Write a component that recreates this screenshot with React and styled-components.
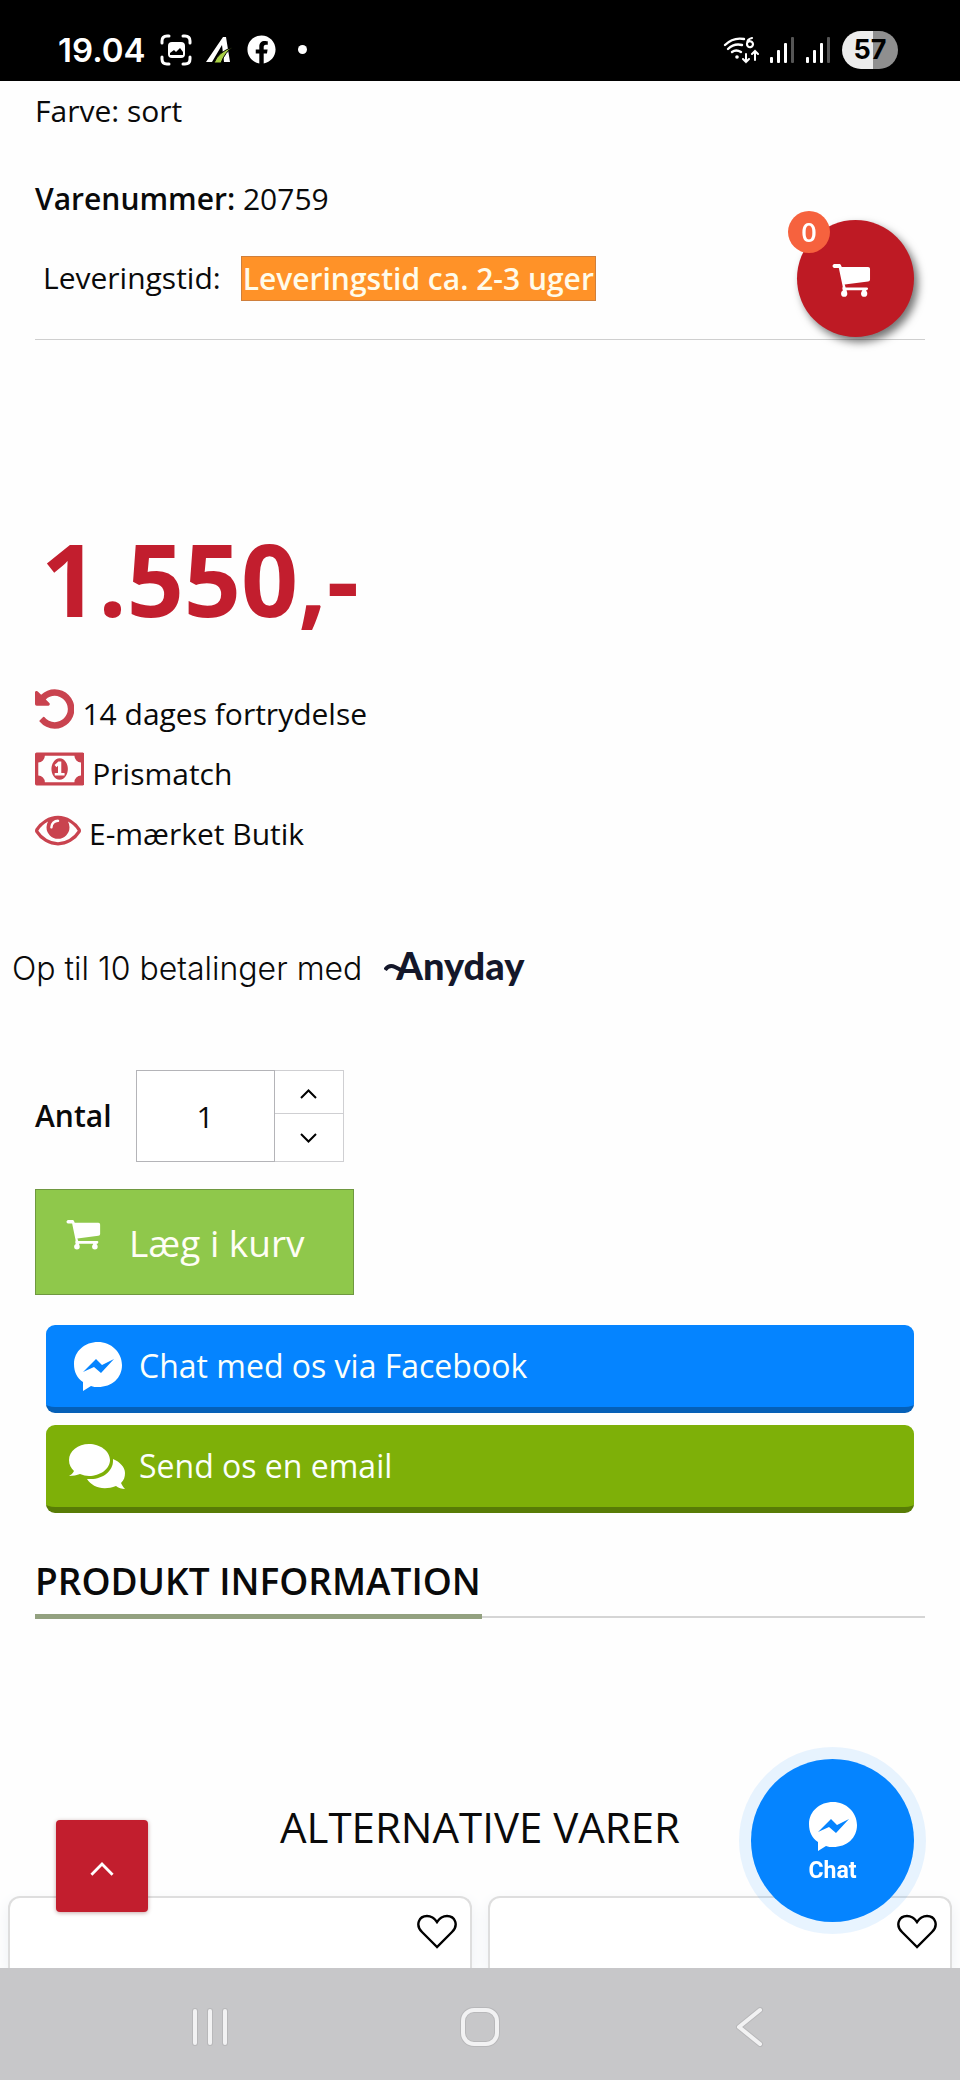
import React, { useState } from "react";
import styled, { createGlobalStyle } from "styled-components";
import { FaFacebook } from "react-icons/fa";

const GlobalStyle = createGlobalStyle`
  *, *::before, *::after { box-sizing: border-box; }
  body { margin: 0; background: #fefefe; }
  button, input { font-family: inherit; color: inherit; margin: 0; }
  h2, p, ul { margin: 0; padding: 0; }
`;

const Page = styled.div`
  display: flex;
  flex-direction: column;
  min-height: 100vh;
  font-family: "Open Sans", sans-serif;
  font-size: 30px;
  line-height: 44px;
  color: #0a0a0a;
`;

/* ---------- status bar ---------- */

const StatusBar = styled.header`
  display: flex;
  justify-content: space-between;
  align-items: center;
  height: 81px;
  padding: 18px 62px 0 58px;
  background: #000;
  color: #fff;
`;

const StatusGroup = styled.div`
  display: flex;
  align-items: center;
  gap: ${(p) => p.$gap}px;
`;

const Clock = styled.time`
  font-family: Inter, sans-serif;
  font-size: 33px;
  font-weight: 600;
  line-height: 40px;
`;

const Dot = styled.span`
  width: 9px;
  height: 9px;
  margin-left: 8px;
  border-radius: 50%;
  background: #fff;
`;

const Battery = styled.span`
  width: 56px;
  height: 38px;
  border-radius: 19px;
  background: linear-gradient(90deg, #ececec 56%, #8f8f8f 56%);
  color: #000;
  font-family: Inter, sans-serif;
  font-size: 27px;
  font-weight: 700;
  line-height: 38px;
  text-align: center;
`;

/* ---------- product facts ---------- */

const Main = styled.main`
  display: flex;
  flex-direction: column;
  flex: 1;
  padding-top: 8px;
`;

const Section = styled.section`
  margin: ${(p) => p.$top || 0}px 35px 0;
`;

const Fact = styled.p`
  margin-bottom: ${(p) => p.$after}px;
`;

const Strong = styled.strong`
  font-weight: 600;
`;

const Delivery = styled.p`
  display: flex;
  gap: 20px;
  padding: 0 8px 38px;
  border-bottom: 1px solid #cfcfcf;
`;

const DeliveryTag = styled.strong`
  border: 1px solid #cf7f3c;
  padding: 0 1px;
  background: #ff9228;
  color: #fffbea;
  font-weight: 600;
  line-height: 43px;
`;

const Price = styled.p`
  padding-left: 6px;
  color: #c21e2e;
  font-size: 100px;
  font-weight: 700;
  line-height: 120px;
`;

const Perks = styled.ul`
  display: flex;
  flex-direction: column;
  gap: 16px;
  list-style: none;
`;

const Perk = styled.li`
  display: flex;
  align-items: center;
  gap: 8px;
  height: 44px;

  svg {
    height: 46px;
    margin-bottom: 10px;
    fill: #c9434f;
  }
`;

const Installments = styled.p`
  display: flex;
  align-items: baseline;
  gap: 22px;
  margin: 87px 12px 0;
  font-family: Inter, sans-serif;
  font-size: 32px;
  font-weight: 300;
`;

const AnydayLogo = styled.span`
  display: flex;
  align-items: baseline;
  color: #14172a;
  font-family: Lato, sans-serif;
  font-size: 38px;
  font-weight: 900;

  svg {
    margin-right: -8px;
  }
`;

/* ---------- purchase form ---------- */

const QuantityRow = styled.div`
  display: flex;
  align-items: center;
  gap: 24px;
`;

const QuantityLabel = styled.label`
  font-weight: 600;
`;

const Stepper = styled.div`
  display: flex;
  height: 92px;
`;

const QuantityInput = styled.input`
  width: 139px;
  border: 1px solid #b4b4b8;
  border-radius: 0;
  background: #fff;
  font-size: 30px;
  text-align: center;
  outline: none;
`;

const StepButtons = styled.div`
  display: grid;
  grid-template-rows: 44px 48px;
  width: 69px;
`;

const StepButton = styled.button`
  display: flex;
  align-items: center;
  justify-content: center;
  padding: 4px 0 0;
  border: 1px solid #cfcfd2;
  border-left: 0;
  background: #fff;

  & + & {
    border-top: 0;
    padding: 0;
  }
`;

const AddToCart = styled.button`
  display: flex;
  align-items: center;
  gap: 28px;
  height: 106px;
  margin-top: 27px;
  padding: 0 48px 0 30px;
  border: 1px solid #6f9840;
  background: #8fc84b;
  color: #fffef5;
  font-size: 37px;

  svg {
    margin-bottom: 14px;
  }
`;

const ContactLinks = styled.nav`
  display: flex;
  flex-direction: column;
  gap: 12px;
  margin: 30px 46px 0;
`;

const ContactLink = styled.a`
  display: flex;
  align-items: center;
  height: 88px;
  border-bottom: 6px solid ${(p) => p.$edge};
  border-radius: 9px;
  background: ${(p) => p.$color};
  color: #fbfffb;
  font-size: 32px;
  text-decoration: none;
`;

const LinkIcon = styled.span`
  display: flex;
  justify-content: center;
  width: 93px;
  padding-left: 10px;
`;

/* ---------- lower sections ---------- */

const InfoHeading = styled.div`
  display: flex;
  border-bottom: 2px solid #d5d5d5;

  h2 {
    margin-bottom: -3px;
    padding: 0 1px 8px 0;
    border-bottom: 5px solid #93a180;
    font-size: 37px;
    font-weight: 600;
    line-height: 50px;
  }
`;

const AltHeading = styled.h2`
  margin-top: 181px;
  font-size: 42px;
  font-weight: 400;
  line-height: 56px;
  text-align: center;
`;

const Cards = styled.section`
  display: grid;
  grid-template-columns: 1fr 1fr;
  gap: 16px;
  flex: 1;
  min-height: 71px;
  margin-top: 41px;
  padding: 0 8px;
`;

const Card = styled.article`
  display: flex;
  justify-content: flex-end;
  align-items: flex-start;
  padding: 16px 13px 0;
  border: 2px solid #dedede;
  border-bottom: 0;
  border-radius: 12px 12px 0 0;
  background: #fff;
  box-shadow: 0 6px 16px #edf0f4;
`;

const IconButton = styled.button`
  display: flex;
  padding: 0;
  border: 0;
  background: none;
`;

const NavBar = styled.nav`
  position: relative;
  z-index: 3;
  display: grid;
  grid-template-columns: 1fr 1fr 1fr;
  justify-items: center;
  align-items: center;
  height: 112px;
  padding: 6px 75px 0;
  background: #c7c7c9;
`;

/* ---------- floating controls ---------- */

const CartButton = styled.button`
  position: fixed;
  top: 220px;
  right: 46px;
  display: flex;
  align-items: center;
  justify-content: center;
  width: 117px;
  height: 117px;
  padding: 4px 8px 0 0;
  border: 0;
  border-radius: 50%;
  background: #be1a24;
  box-shadow: 4px 5px 8px rgba(0, 0, 0, 0.55);
`;

const CartCount = styled.span`
  position: absolute;
  top: -9px;
  left: -9px;
  width: 42px;
  height: 42px;
  border-radius: 50%;
  background: #f6623e;
  color: #fff;
  font-size: 27px;
  font-weight: 600;
  line-height: 42px;
  text-align: center;
`;

const TopButton = styled.button`
  position: fixed;
  bottom: 168px;
  left: 56px;
  display: flex;
  align-items: center;
  justify-content: center;
  width: 92px;
  height: 92px;
  padding: 6px 0 0;
  border: 0;
  border-radius: 4px;
  background: #c21e2e;
  box-shadow: 0 1px 4px rgba(90, 0, 0, 0.35);
`;

const ChatButton = styled.button`
  position: fixed;
  right: 46px;
  bottom: 158px;
  display: flex;
  flex-direction: column;
  align-items: center;
  gap: 7px;
  width: 163px;
  height: 163px;
  padding: 43px 0 0;
  border: 0;
  border-radius: 50%;
  background: #0584ff;
  box-shadow: 0 0 0 12px rgba(5, 132, 255, 0.09);

  span {
    color: #fff;
    font-family: Roboto, sans-serif;
    font-size: 23px;
    font-weight: 700;
    line-height: 26px;
  }
`;

/* ---------- drawings ---------- */

const CaptureIcon = () => (
  <svg width="32" height="32" viewBox="0 0 32 32" fill="none" stroke="#fff" strokeWidth="3" strokeLinecap="round">
    <path d="M2 9V7q0-5 5-5h2M23 2h2q5 0 5 5v2M30 23v2q0 5-5 5h-2M9 30H7q-5 0-5-5v-2" />
    <rect x="8" y="8" width="17" height="16" rx="4" fill="#fff" stroke="none" />
    <path d="M10 21v-2l4-3 2 2 4-4 3 4v3z" fill="#000" stroke="none" />
  </svg>
);

const PeakIcon = () => (
  <svg width="27" height="27" viewBox="0 0 27 27">
    <path d="M0 26L17 1h3l4 25h-6L16 9 6 26z" fill="#fff" />
    <path d="M8 27q4-11 19-16-8 5-12 16z" fill="#a8cf45" stroke="#000" strokeWidth="1" />
  </svg>
);

const WifiIcon = () => (
  <svg width="36" height="30" viewBox="0 0 36 30" fill="none" stroke="#fff" strokeWidth="2.4" strokeLinecap="round">
    <path d="M2 10q8-8 19-6M5 14q6-6 14-4M9 17q4-3 9 0" />
    <circle cx="14" cy="22" r="1.8" fill="#fff" stroke="none" />
    <path d="M29 3q-5 1-5 6a3 3 0 1 0 1-2" strokeWidth="2.2" />
    <path d="M23 19v8m-3-3l3 3 3-3M32 25v-9m-3 3l3-3 3 3" strokeWidth="2" />
  </svg>
);

const SignalIcon = () => (
  <svg width="25" height="28" viewBox="0 0 25 28" fill="#fff">
    <rect x="0" y="21" width="3" height="6" rx="1" />
    <rect x="7" y="14" width="3" height="13" rx="1" />
    <rect x="14" y="7" width="3" height="20" rx="1" />
    <rect x="21" y="1" width="3" height="26" rx="1" fill="#555" />
  </svg>
);

const UndoIcon = () => (
  <svg viewBox="128 0 1536 1792">
    <path d="M1664 896q0 156-61 298t-164 245-245 164-298 61q-172 0-327-72.500t-264-204.500q-7-10-6.500-22.500t8.500-20.500l137-138q10-9 25-9 16 2 23 12 73 95 179 147t225 52q104 0 198.500-40.500t163.500-109.500 109.500-163.500 40.500-198.500-40.500-198.500-109.500-163.500-163.500-109.500-198.500-40.500q-98 0-188 35.500t-160 101.500l137 138q31 30 14 69-17 40-59 40h-448q-26 0-45-19t-19-45v-448q0-42 40-59 39-17 69 14l130 129q107-101 244.500-156.500t284.500-55.500q156 0 298 61t245 164 164 245 61 298z" />
  </svg>
);

const MoneyIcon = () => (
  <svg viewBox="0 0 1920 1792">
    <path d="M768 1152h384v-96h-128v-448h-114l-148 137 77 80q42-37 55-57h2v288h-128v96zm512-256q0 70-21 142t-59.500 134-101.500 101-138 39-138-39-101.500-101-59.500-134-21-142 21-142 59.500-134 101.500-101 138-39 138 39 101.500 101 59.500 134 21 142zm512 256v-512q-106 0-181-75t-75-181h-1152q0 106-75 181t-181 75v512q106 0 181 75t75 181h1152q0-106 75-181t181-75zm128-832v1152q0 26-19 45t-45 19h-1792q-26 0-45-19t-19-45v-1152q0-26 19-45t45-19h1792q26 0 45 19t19 45z" />
  </svg>
);

const EyeIcon = () => (
  <svg viewBox="0 0 1792 1792">
    <path d="M1664 960q-152-236-381-353 61 104 61 225 0 185-131.500 316.500t-316.500 131.500-316.500-131.500-131.500-316.500q0-121 61-225-229 117-381 353 133 205 333.500 326.500t434.500 121.500 434.500-121.500 333.500-326.500zm-720-384q0-20-14-34t-34-14q-125 0-214.500 89.500t-89.500 214.500q0 20 14 34t34 14 34-14 14-34q0-86 61-147t147-61q20 0 34-14t14-34zm848 384q0 34-20 69-140 230-376.500 368.500t-499.500 138.500-499.500-139-376.500-368q-20-35-20-69t20-69q140-229 376.500-368t499.500-139 499.500 139 376.500 368q20 35 20 69z" />
  </svg>
);

const CartIcon = ({ size }) => (
  <svg width={size} height={(size * 34) / 40} viewBox="0 0 40 34" fill="#fff">
    <path d="M2 0h6q1 0 2 3h27q2 0 2 2v11q0 2-2 2l-24 3 1 3h22q2 1 0 3H12q-2-1-1-4L7 4H2Q-1 2 2 0z" />
    <path d="M11 25h4v4h-4zM31 25h4v4h-4z" />
    <circle cx="12.500" cy="30.500" r="3.200" />
    <circle cx="33" cy="30.500" r="3.200" />
  </svg>
);

const MessengerIcon = ({ bolt }) => (
  <svg width="48" height="49" viewBox="0 0 48 49">
    <path d="M24 0C11 0 0 9 0 22c0 8 3 14 9 18v9l8-5c2 1 5 1 7 1 14 0 24-9 24-22S37 0 24 0z" fill="#fff" />
    <path d="M9 30L22 17l6 6 12-6-13 14-7-6z" fill={bolt} />
  </svg>
);

const CommentsIcon = () => (
  <svg width="57" height="46" viewBox="0 0 57 46" fill="#fff">
    <path d="M20 1C9 1 0 8 0 17c0 5 2 8 5 11-1 2-3 4-5 5 4 0 8-1 11-2 3 1 6 2 9 2 11 0 21-7 21-16S31 1 20 1z" />
    <path d="M44 16c7 3 12 8 12 14 0 4-1 7-4 10 1 2 2 4 4 6-3 0-7-1-9-3-13 5-24 1-29-7h4c12 0 22-8 22-18z" />
  </svg>
);

const Chevron = ({ down, width = 17, color = "#000", stroke = 2 }) => (
  <svg width={width} height={(width * 10) / 17} viewBox="0 0 17 10" fill="none" stroke={color} strokeWidth={stroke}>
    <path d={down ? "M1 1l7.500 7.500L16 1" : "M1 9l7.500-7.500L16 9"} />
  </svg>
);

const HeartIcon = () => (
  <svg width="40" height="35" viewBox="0 0 40 35" fill="none" stroke="#000" strokeWidth="2.400">
    <path d="M20 33L5 18C-2 11 2 2 10 2q6 0 10 6 4-6 10-6c8 0 12 9 5 16z" />
  </svg>
);

const Swoosh = () => (
  <svg width="20" height="17" viewBox="0 0 20 17" fill="none" stroke="#14172a" strokeWidth="4">
    <path d="M1 7q4-6 10-3l8 4" />
  </svg>
);

const NavIcon = ({ children }) => (
  <svg width="40" height="40" viewBox="0 0 40 40" fill="none" strokeLinecap="round" strokeLinejoin="round">
    <g stroke="#b8b8ba" strokeWidth="6">{children}</g>
    <g stroke="#f2f2f3" strokeWidth="4">{children}</g>
  </svg>
);

/* ---------- page ---------- */

export default function App() {
  const [quantity, setQuantity] = useState(1);

  return (
    <Page>
      <GlobalStyle />
      <StatusBar>
        <StatusGroup $gap={14}>
          <Clock>19.04</Clock>
          <CaptureIcon />
          <PeakIcon />
          <FaFacebook size={29} />
          <Dot />
        </StatusGroup>
        <StatusGroup $gap={11}>
          <WifiIcon />
          <SignalIcon />
          <SignalIcon />
          <Battery>57</Battery>
        </StatusGroup>
      </StatusBar>

      <Main>
        <Section>
          <Fact $after={44}>Farve: sort</Fact>
          <Fact $after={35}>
            <Strong>Varenummer:</Strong> 20759
          </Fact>
          <Delivery>
            Leveringstid: <DeliveryTag>Leveringstid ca. 2-3 uger</DeliveryTag>
          </Delivery>
        </Section>

        <Section $top={178}>
          <Price>1.550,-</Price>
        </Section>

        <Section $top={54}>
          <Perks>
            <Perk><UndoIcon />14 dages fortrydelse</Perk>
            <Perk><MoneyIcon />Prismatch</Perk>
            <Perk><EyeIcon />E-mærket Butik</Perk>
          </Perks>
        </Section>

        <Installments>
          Op til 10 betalinger med
          <AnydayLogo><Swoosh />Anyday</AnydayLogo>
        </Installments>

        <Section $top={79}>
          <QuantityRow>
            <QuantityLabel htmlFor="quantity">Antal</QuantityLabel>
            <Stepper>
              <QuantityInput
                id="quantity"
                inputMode="numeric"
                value={quantity}
                onChange={(e) => setQuantity(Number(e.target.value) || 1)}
              />
              <StepButtons>
                <StepButton aria-label="Flere" onClick={() => setQuantity(quantity + 1)}><Chevron /></StepButton>
                <StepButton aria-label="Færre" onClick={() => setQuantity(Math.max(1, quantity - 1))}><Chevron down /></StepButton>
              </StepButtons>
            </Stepper>
          </QuantityRow>
          <AddToCart><CartIcon size={35} />Læg i kurv</AddToCart>
        </Section>

        <ContactLinks>
          <ContactLink href="#facebook" $color="#0584ff" $edge="#0560b8">
            <LinkIcon><MessengerIcon bolt="#0584ff" /></LinkIcon>
            Chat med os via Facebook
          </ContactLink>
          <ContactLink href="#email" $color="#7eb008" $edge="#587c06">
            <LinkIcon><CommentsIcon /></LinkIcon>
            Send os en email
          </ContactLink>
        </ContactLinks>

        <Section $top={43}>
          <InfoHeading><h2>PRODUKT INFORMATION</h2></InfoHeading>
        </Section>

        <AltHeading>ALTERNATIVE VARER</AltHeading>
        <Cards>
          <Card><IconButton aria-label="Favorit"><HeartIcon /></IconButton></Card>
          <Card><IconButton aria-label="Favorit"><HeartIcon /></IconButton></Card>
        </Cards>
      </Main>

      <CartButton aria-label="Kurv">
        <CartIcon size={39} />
        <CartCount>0</CartCount>
      </CartButton>
      <TopButton aria-label="Til toppen"><Chevron width={24} color="#fff" /></TopButton>
      <ChatButton>
        <MessengerIcon bolt="#0584ff" />
        <span>Chat</span>
      </ChatButton>

      <NavBar>
        <IconButton aria-label="Seneste">
          <NavIcon><path d="M5 4v32M20 4v32M35 4v32" /></NavIcon>
        </IconButton>
        <IconButton aria-label="Hjem">
          <NavIcon><rect x="3" y="3" width="34" height="34" rx="11" /></NavIcon>
        </IconButton>
        <IconButton aria-label="Tilbage">
          <NavIcon><path d="M30 3L9 20l21 17" /></NavIcon>
        </IconButton>
      </NavBar>
    </Page>
  );
}
